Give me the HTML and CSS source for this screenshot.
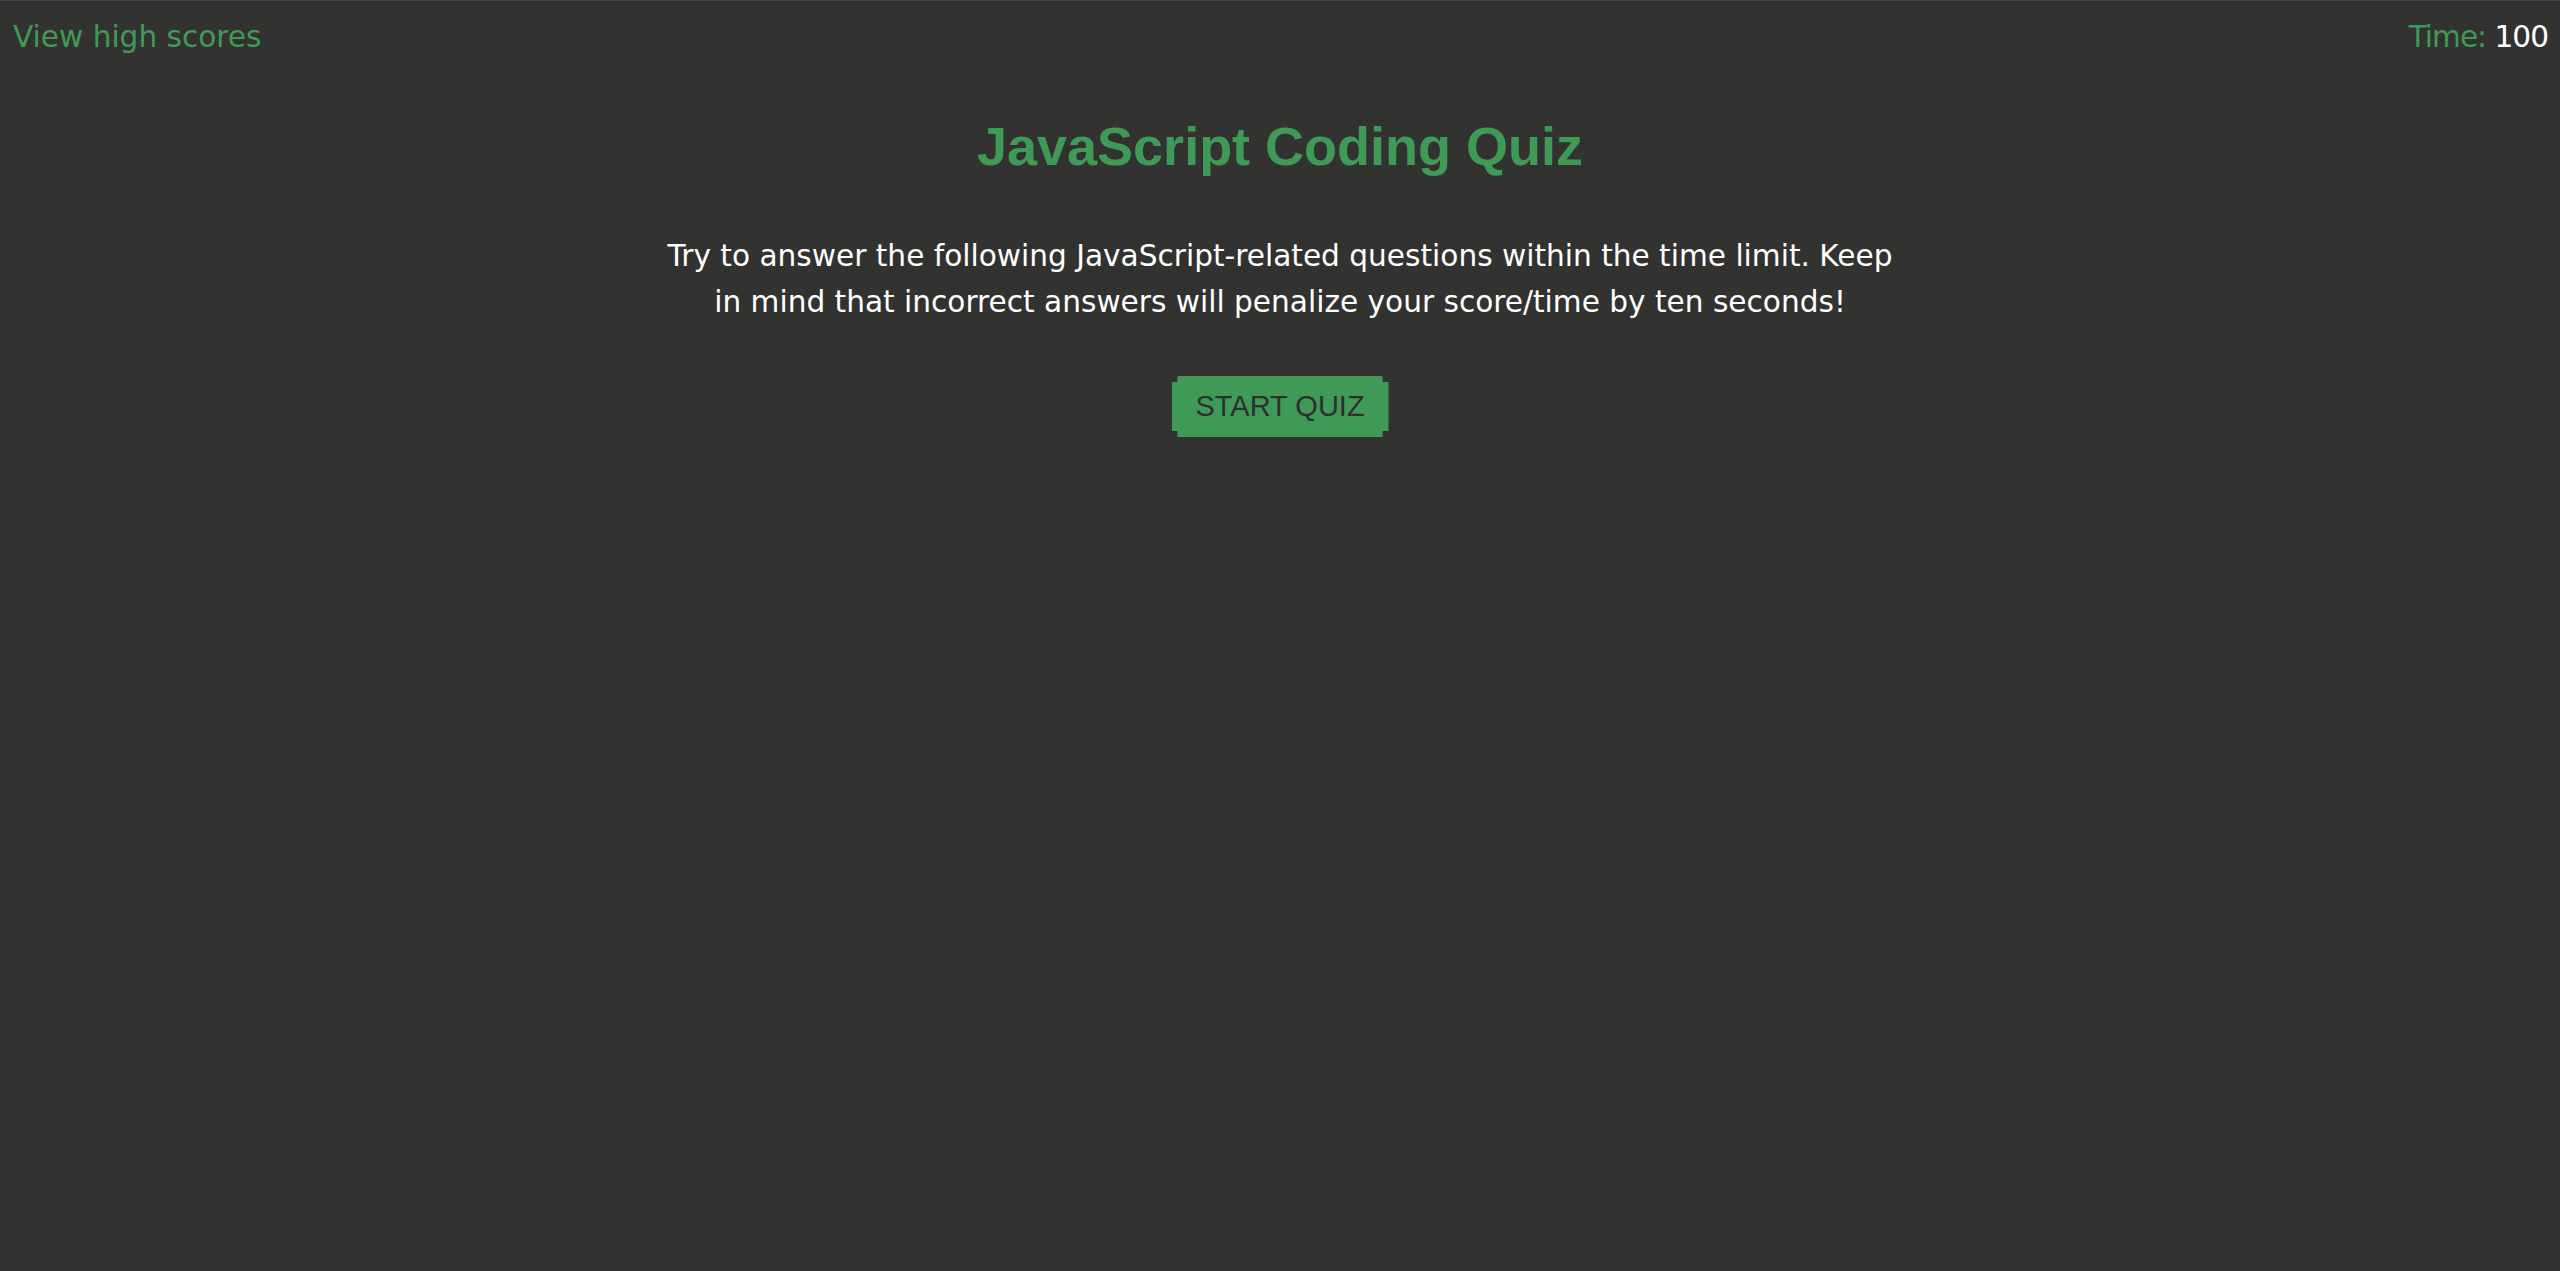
FILE: index.html
```html
<!DOCTYPE html>
<html lang="en">
<head>
<meta charset="utf-8">
<title>JavaScript Coding Quiz</title>
<link rel="stylesheet" href="styles.css">
</head>
<body>
<header class="top-bar">
  <a class="high-scores" href="#">View high scores</a>
  <div class="timer">Time: <span class="timer-value">100</span></div>
</header>
<main class="intro">
  <h1 class="title">JavaScript Coding Quiz</h1>
  <p class="description">Try to answer the following JavaScript-related questions within the time limit. Keep in mind that incorrect answers will penalize your score/time by ten seconds!</p>
  <button class="start-btn" type="button">START QUIZ</button>
</main>
</body>
</html>
```

FILE: styles.css
```css
html, body {
  margin: 0;
  padding: 0;
  height: 100%;
}

body {
  background: #323230;
  border-top: 1px solid #474745;
  box-sizing: border-box;
  font-family: "DejaVu Sans", "Open Sans", sans-serif;
}

.top-bar {
  display: flex;
  justify-content: space-between;
  align-items: baseline;
  padding: 16px 12px 0 13px;
  font-size: 29.6px;
  line-height: 40px;
  font-weight: normal;
}

.high-scores {
  color: #409a57;
  text-decoration: none;
}

.timer {
  color: #409a57;
  letter-spacing: -1px;
}

.timer-value {
  color: #ffffff;
}

.intro {
  display: flex;
  flex-direction: column;
  align-items: center;
}

.title {
  margin: 59px 0 0;
  font-family: "Liberation Sans", Arial, sans-serif;
  font-weight: bold;
  font-size: 54px;
  line-height: 60px;
  color: #409a57;
}

.description {
  width: 1260px;
  margin: 57px 0 0;
  text-align: center;
  color: #ffffff;
  font-size: 29.6px;
  line-height: 46px;
}

.start-btn {
  margin-top: 51px;
  width: 217px;
  height: 61px;
  border: none;
  padding: 0;
  background: #409a57;
  color: #2f302e;
  font-family: "Liberation Sans", Arial, sans-serif;
  font-size: 29px;
  clip-path: polygon(6px 0, calc(100% - 6px) 0, calc(100% - 6px) 6px, 100% 6px, 100% calc(100% - 6px), calc(100% - 6px) calc(100% - 6px), calc(100% - 6px) 100%, 6px 100%, 6px calc(100% - 6px), 0 calc(100% - 6px), 0 6px, 6px 6px);
  cursor: pointer;
}
```
